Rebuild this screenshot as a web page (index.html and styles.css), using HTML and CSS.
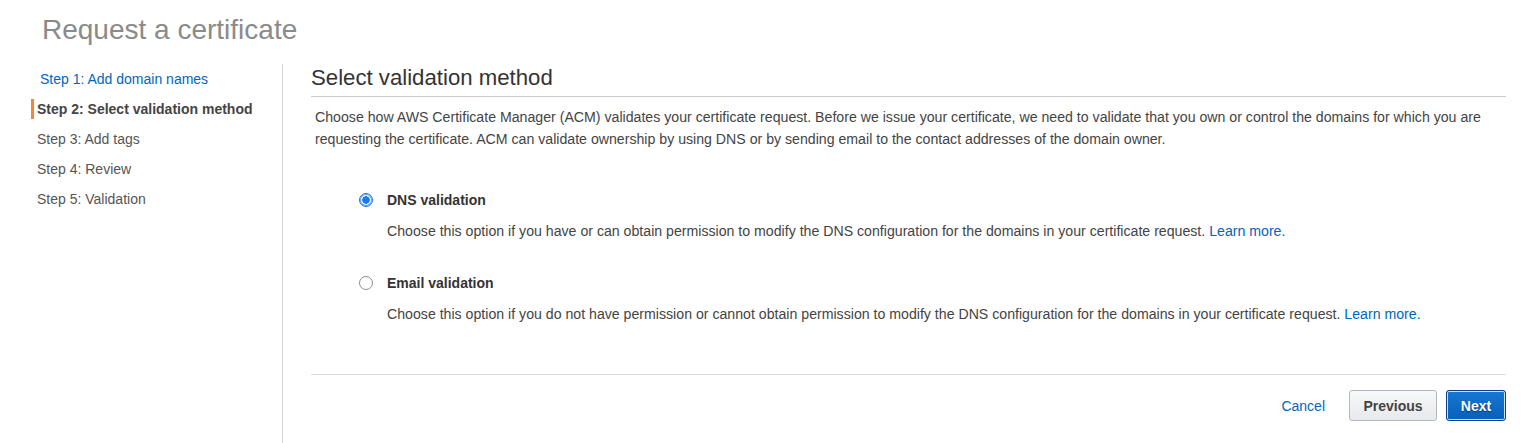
FILE: index.html
```html
<!DOCTYPE html>
<html>
<head>
<meta charset="utf-8">
<link rel="stylesheet" href="styles.css">
</head>
<body>
<div class="page">
  <h1 class="title">Request a certificate</h1>
  <div class="layout">
    <nav class="steps">
      <a class="step step-link" href="#">Step 1: Add domain names</a>
      <div class="step step-active">Step 2: Select validation method</div>
      <div class="step">Step 3: Add tags</div>
      <div class="step">Step 4: Review</div>
      <div class="step">Step 5: Validation</div>
    </nav>
    <main class="main">
      <h2 class="heading">Select validation method</h2>
      <p class="intro">Choose how AWS Certificate Manager (ACM) validates your certificate request. Before we issue your certificate, we need to validate that you own or control the domains for which you are requesting the certificate. ACM can validate ownership by using DNS or by sending email to the contact addresses of the domain owner.</p>
      <div class="options">
        <div class="option">
          <span class="radio radio-on"></span>
          <span class="opt-label">DNS validation</span>
          <span class="opt-desc">Choose this option if you have or can obtain permission to modify the DNS configuration for the domains in your certificate request. <a href="#" class="link">Learn more.</a></span>
        </div>
        <div class="option">
          <span class="radio"></span>
          <span class="opt-label">Email validation</span>
          <span class="opt-desc">Choose this option if you do not have permission or cannot obtain permission to modify the DNS configuration for the domains in your certificate request. <a href="#" class="link">Learn more.</a></span>
        </div>
      </div>
      <div class="actions">
        <a href="#" class="cancel">Cancel</a>
        <button class="btn btn-secondary">Previous</button>
        <button class="btn btn-primary">Next</button>
      </div>
    </main>
  </div>
</div>
</body>
</html>
```
FILE: styles.css
```css
* { box-sizing: border-box; }
html, body { margin: 0; padding: 0; background: #fff; }
body {
  font-family: "Liberation Sans", Arial, sans-serif;
  color: #444;
  overflow: hidden;
}
.page { padding: 0 30px 0 0; }
.title {
  margin: 0;
  padding: 14px 0 0 42px;
  height: 64px;
  font-size: 28px;
  font-weight: normal;
  line-height: 32px;
  color: #8a8a8a;
}
.layout {
  display: flex;
  min-height: calc(100vh - 64px);
}
.steps {
  width: 283px;
  flex: none;
  border-right: 1px solid #d5d5d5;
  display: flex;
  flex-direction: column;
  padding-left: 31px;
}
.step {
  display: flex;
  align-items: center;
  height: 30px;
  font-size: 14px;
  color: #555;
  padding-left: 6px;
  text-decoration: none;
}
.step-link { color: #0066c0; padding-left: 9px; }
.step-active {
  font-weight: bold;
  color: #444;
  position: relative;
}
.step-active::before {
  content: "";
  position: absolute;
  left: 0;
  top: 5px;
  width: 3px;
  height: 20px;
  background: #f58536;
}
.main {
  flex: 1;
  padding-left: 28px;
}
.heading {
  margin: 0;
  font-size: 22.2px;
  font-weight: normal;
  line-height: 28px;
  color: #333;
  padding-bottom: 4px;
  border-bottom: 1px solid #ccc;
}
.intro {
  margin: 9px 0 0;
  padding: 0 4px 0 4px;
  font-size: 14.15px;
  line-height: 22px;
  color: #444;
}
.options {
  margin-top: 40px;
  padding-left: 48px;
  display: flex;
  flex-direction: column;
  gap: 32px;
}
.option {
  display: grid;
  grid-template-columns: 28px 1fr;
  row-gap: 11px;
  align-items: center;
}
.radio {
  width: 14px;
  height: 14px;
  border-radius: 50%;
  border: 1px solid #8e8e8e;
  background: #fff;
}
.radio-on {
  border: 1px solid #1a73e8;
  background: radial-gradient(circle, #1a7cf0 0 3.5px, #fff 4px 100%);
  box-shadow: 0 0 0 1px #5ba1f5 inset;
}
.opt-label {
  font-size: 14px;
  font-weight: bold;
  line-height: 20px;
  color: #333;
}
.opt-desc {
  grid-column: 2;
  font-size: 14.15px;
  line-height: 20px;
  color: #444;
}
.link { color: #0066c0; text-decoration: none; }
.actions {
  margin-top: 50px;
  border-top: 1px solid #ddd;
  padding-top: 15px;
  display: flex;
  justify-content: flex-end;
  align-items: center;
}
.cancel {
  font-size: 14px;
  color: #0066c0;
  text-decoration: none;
  margin-right: 24px;
}
.btn {
  font-family: "Liberation Sans", Arial, sans-serif;
  font-size: 14px;
  font-weight: bold;
  height: 31px;
  border-radius: 3px;
  padding: 0 10px;
  cursor: pointer;
}
.btn-secondary {
  width: 88px;
  color: #444;
  background: linear-gradient(#f7f8fa, #e7e9ec);
  border: 1px solid #b5b8bd;
  margin-right: 9px;
}
.btn-primary {
  width: 60px;
  color: #fff;
  background: linear-gradient(#1677d2, #075fb9);
  border: 1px solid #0b3f86;
  box-shadow: inset 0 0 0 1px #cfe2f7;
  text-shadow: 0 1px 1px rgba(0,0,0,0.5);
}
```
